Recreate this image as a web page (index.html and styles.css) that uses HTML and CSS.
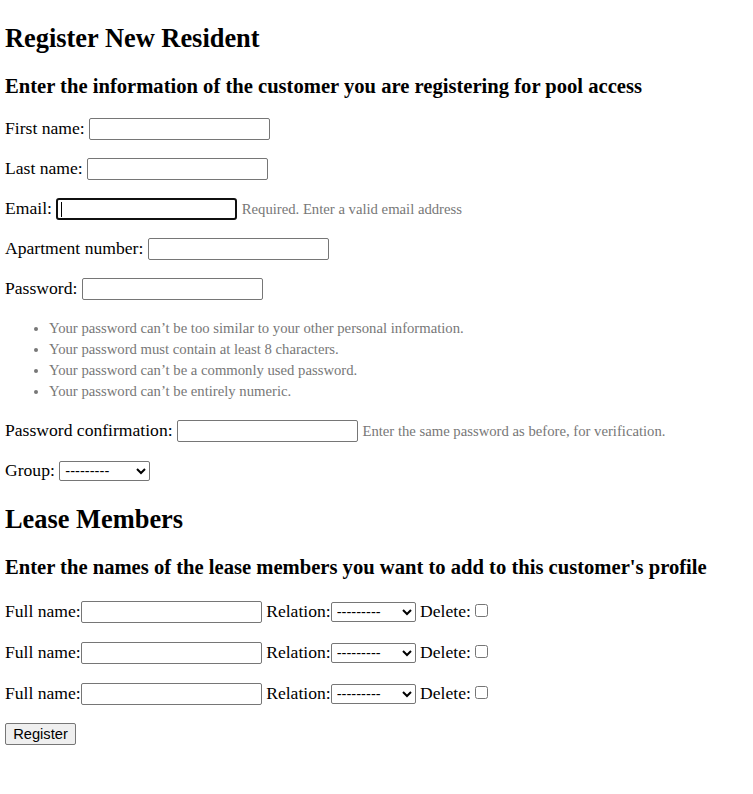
FILE: index.html
```html
<!DOCTYPE html>
<html>
<head>
<meta charset="utf-8">
<title>Register</title>
<link rel="stylesheet" href="styles.css">
</head>
<body>
<h2 class="title">Register New Resident</h2>
<form>
<h3 class="subtitle">Enter the information of the customer you are registering for pool access</h3>
<p class="row"><label for="id_first_name">First name:</label> <input class="field" type="text" id="id_first_name"></p>
<p class="row"><label for="id_last_name">Last name:</label> <input class="field" type="text" id="id_last_name"></p>
<p class="row"><label for="id_email">Email:</label> <input class="field focused" type="email" id="id_email"> <span class="helptext">Required. Enter a valid email address</span></p>
<p class="row"><label for="id_apt">Apartment number:</label> <input class="field" type="text" id="id_apt"></p>
<p class="row"><label for="id_password1">Password:</label> <input class="field" type="password" id="id_password1"></p>
<ul class="helplist">
<li>Your password can’t be too similar to your other personal information.</li>
<li>Your password must contain at least 8 characters.</li>
<li>Your password can’t be a commonly used password.</li>
<li>Your password can’t be entirely numeric.</li>
</ul>
<p class="row"><label for="id_password2">Password confirmation:</label> <input class="field" type="password" id="id_password2"> <span class="helptext">Enter the same password as before, for verification.</span></p>
<p class="row"><label for="id_group">Group:</label> <select class="choice choice-group" id="id_group"><option>---------</option><option>Resident</option></select></p>
<h2 class="title">Lease Members</h2>
<h3 class="subtitle">Enter the names of the lease members you want to add to this customer's profile</h3>
<p class="row member"><label>Full name:</label><input class="field" type="text"> <label>Relation:</label><select class="choice"><option>---------</option><option>Spouse</option></select> <label>Delete:</label><input class="check" type="checkbox"></p>
<p class="row member"><label>Full name:</label><input class="field" type="text"> <label>Relation:</label><select class="choice"><option>---------</option><option>Spouse</option></select> <label>Delete:</label><input class="check" type="checkbox"></p>
<p class="row member"><label>Full name:</label><input class="field" type="text"> <label>Relation:</label><select class="choice"><option>---------</option><option>Spouse</option></select> <label>Delete:</label><input class="check" type="checkbox"></p>
<input class="button" type="submit" value="Register">
</form>
</body>
</html>
```
FILE: styles.css
```css
body {
  margin: 0 5px 8px;
  font-family: "Liberation Serif", "Times New Roman", serif;
  font-size: 17.6px;
  color: #000;
  background: #fff;
}
.title {
  font-size: 26.4px;
  font-weight: bold;
  margin: 23px 0 20.6px;
}
.subtitle {
  font-size: 20.6px;
  font-weight: bold;
  margin: 20.6px 0;
}
.row {
  margin: 18px 0;
}
.member {
  margin: 18.7px 0;
}
.subtitle + .member {
  margin-top: 22.6px;
}
.field {
  box-sizing: border-box;
  width: 181px;
  height: 22px;
  border: 1px solid #767676;
  border-radius: 2px;
  padding: 1px 3px;
  font-family: "Liberation Sans", Arial, sans-serif;
  font-size: 14.7px;
  background: #fff;
  vertical-align: baseline;
  margin: 0;
}
.focused {
  border: 2px solid #101010;
  border-radius: 3px;
  outline: none;
  background: linear-gradient(#000, #000) no-repeat 3px 50% / 1px 15px, #fff;
}
.helptext {
  color: #777;
  font-size: 14.7px;
}
.helplist {
  color: #777;
  font-size: 14.7px;
  margin: 17.6px 0;
  padding-left: 44px;
}
.helplist li {
  line-height: 21px;
}
.choice {
  box-sizing: border-box;
  height: 20px;
  width: 85px;
  border: 1px solid #767676;
  border-radius: 2px;
  font-family: "Liberation Sans", Arial, sans-serif;
  font-size: 14.7px;
  background: #fff;
  color: #000;
  margin: 0;
  padding: 0 0 0 1px;
}
.choice-group {
  width: 91px;
}
.check {
  width: 13px;
  height: 13px;
  margin: 3px 3px 3px 4.4px;
  vertical-align: baseline;
}
.button {
  box-sizing: border-box;
  width: 71px;
  height: 22px;
  font-family: "Liberation Sans", Arial, sans-serif;
  font-size: 14.7px;
  background: #efefef;
  border: 1px solid #767676;
  border-radius: 2px;
  padding: 0 6px;
  color: #000;
  margin: 0;
}
```
